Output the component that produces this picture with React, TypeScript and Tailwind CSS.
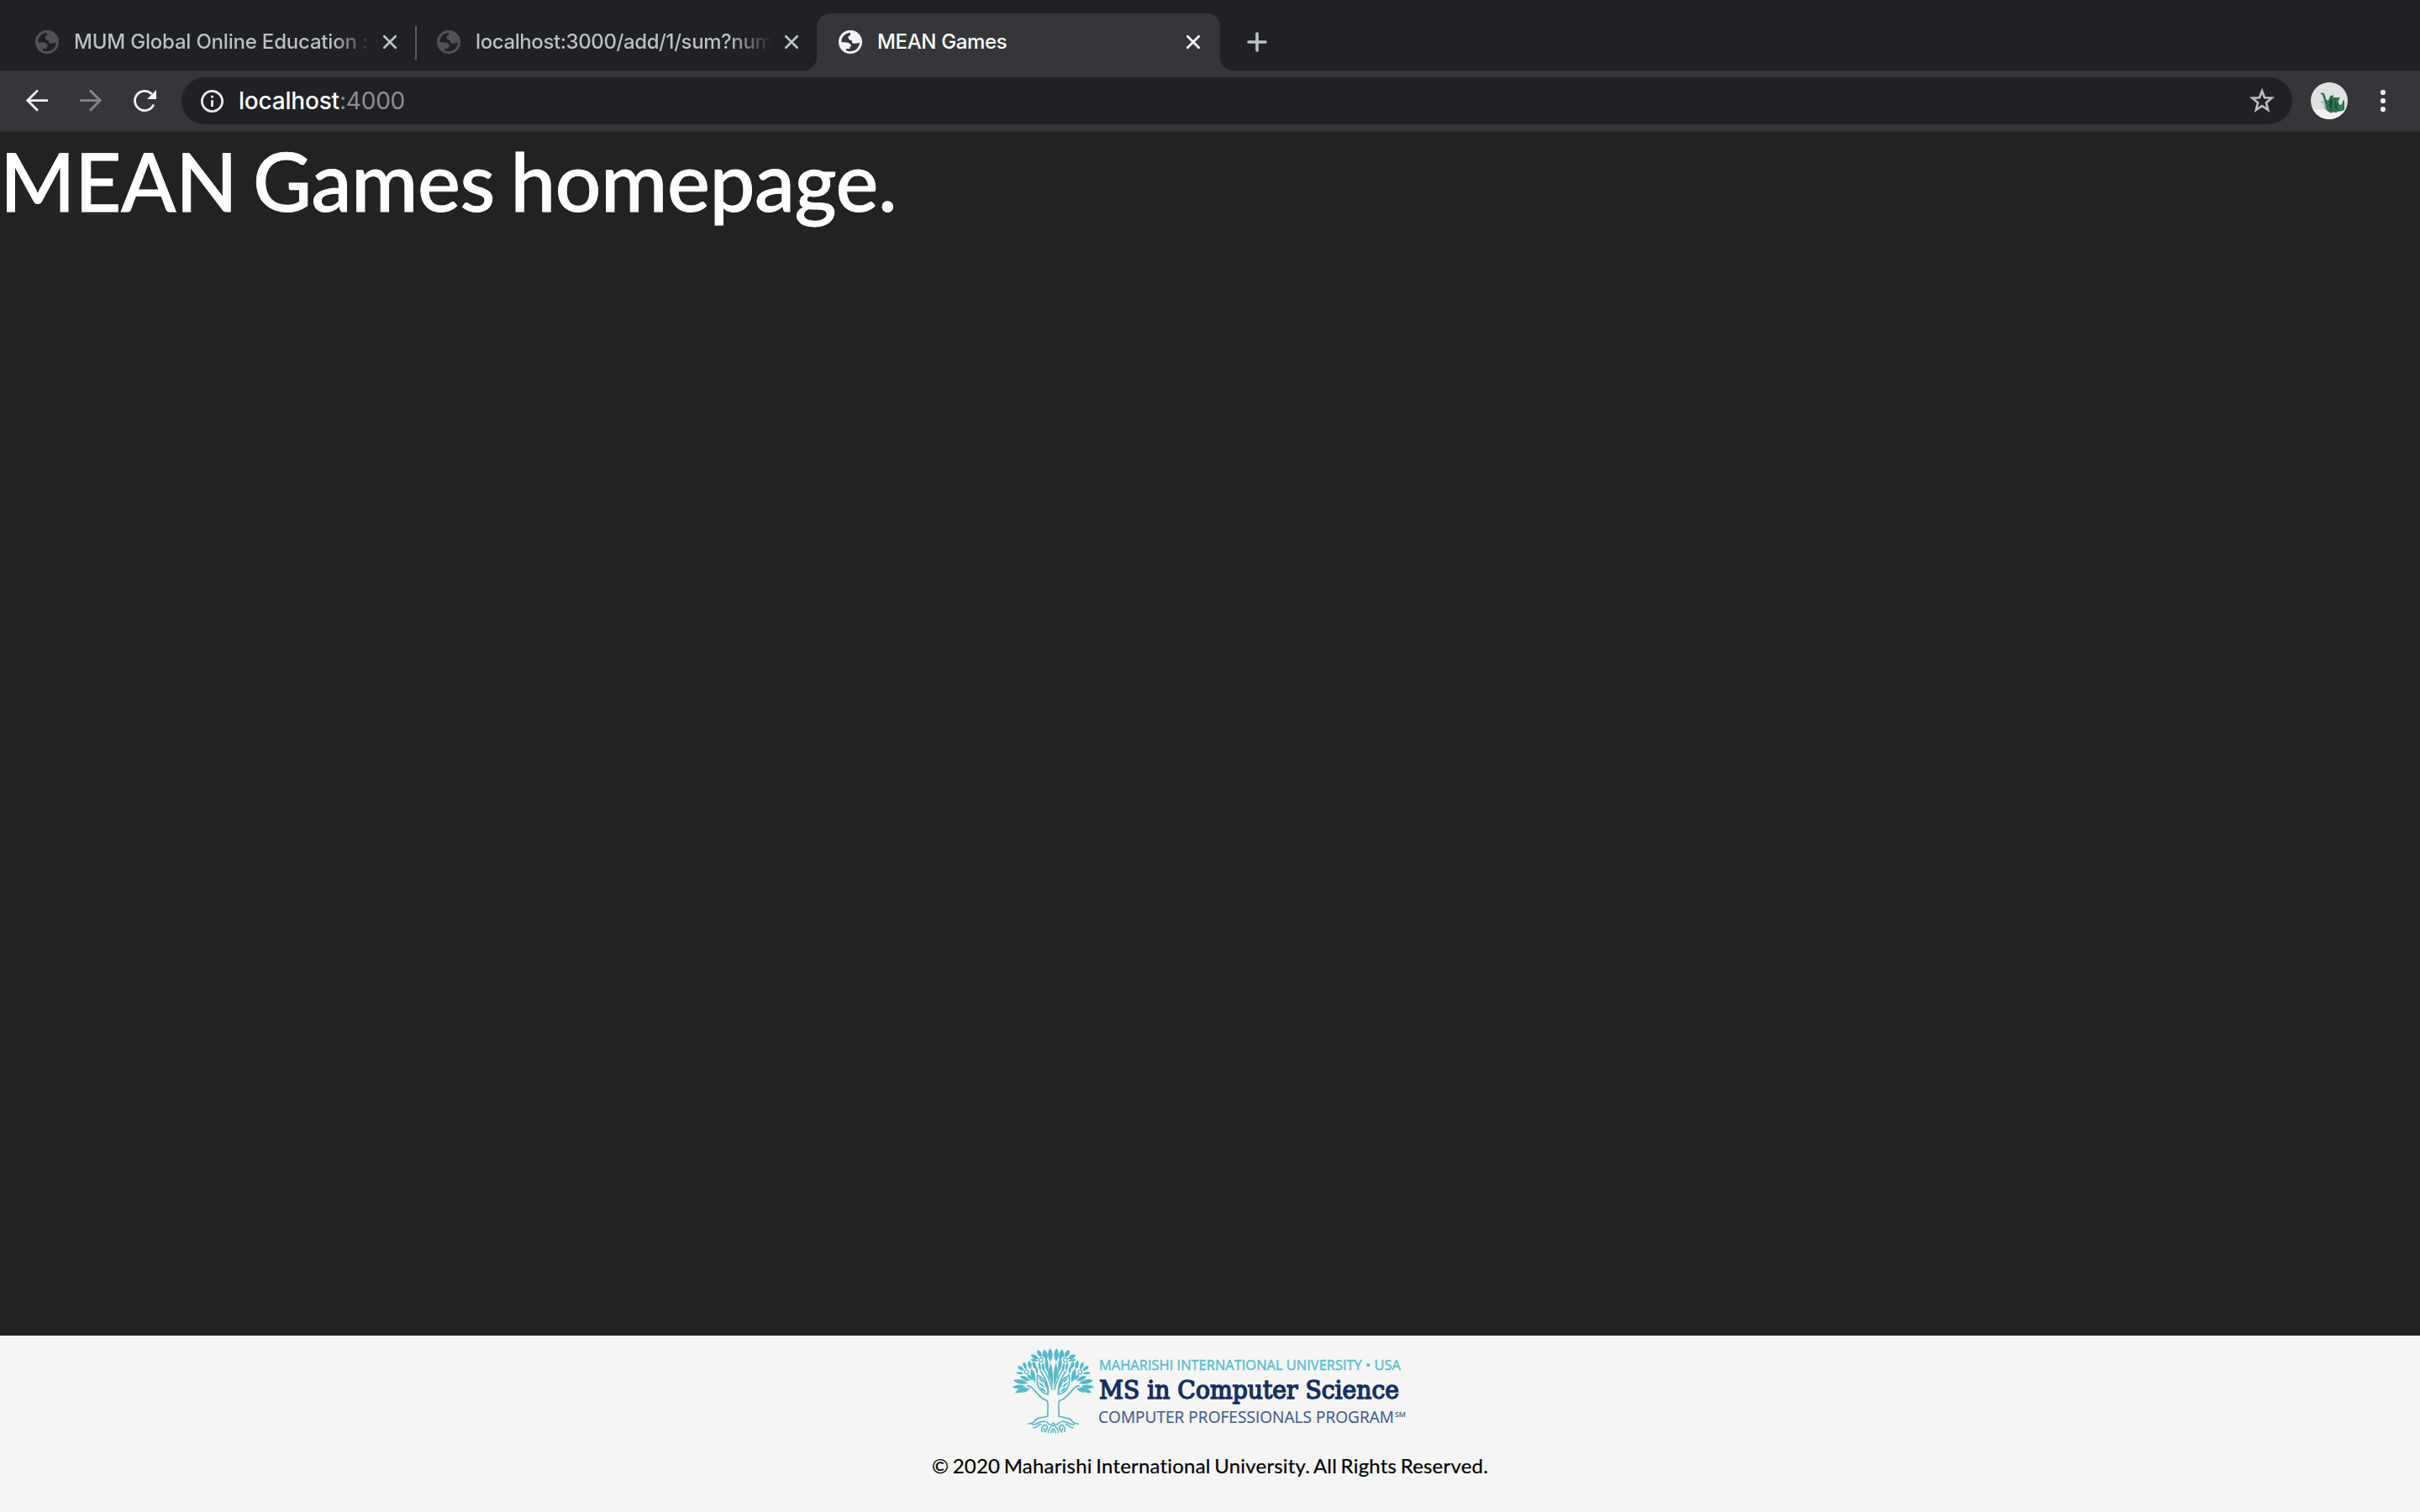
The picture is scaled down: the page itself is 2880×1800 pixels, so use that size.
import React from "react";

type Leaf = [number, number, number, number, number];

// base x, base y, tip x, tip y, width
const LEAVES: Leaf[] = [
  [180, 124, 179, 75, 17],
  [167, 120, 158, 79, 16],
  [148, 108, 134, 81, 15],
  [153, 108, 159, 83, 9],
  [139, 113, 110, 99, 14],
  [138, 120, 108, 116, 9],
  [169, 160, 165, 108, 13],
  [187, 215, 180, 124, 12],
  [177, 190, 174, 140, 8],
  [157, 160, 152, 126, 10],
  [145, 158, 139, 124, 9],
  [128, 150, 118, 122, 13],
  [110, 150, 103, 119, 14],
  [94, 152, 84, 124, 12],
  [86, 156, 64, 138, 13],
  [85, 165, 57, 163, 10],
  [125, 198, 112, 148, 15],
  [133, 168, 130, 140, 9],
  [116, 190, 98, 168, 11],
  [107, 192, 72, 175, 14],
  [99, 200, 48, 190, 16],
  [92, 211, 44, 214, 14],
  [98, 215, 54, 234, 15],
  [108, 216, 80, 234, 9],
];

function leafPath([x1, y1, x2, y2, w]: Leaf) {
  const dx = x2 - x1;
  const dy = y2 - y1;
  const len = Math.hypot(dx, dy);
  const nx = (-dy / len) * w;
  const ny = (dx / len) * w;
  const mx = x1 + dx * 0.56;
  const my = y1 + dy * 0.56;
  return `M${x1} ${y1}Q${mx + nx} ${my + ny} ${x2} ${y2}Q${mx - nx} ${my - ny} ${x1} ${y1}Z`;
}

function TreeHalf() {
  return (
    <g>
      {LEAVES.map((l, i) => (
        <path key={i} d={leafPath(l)} fill="#55b9c9" />
      ))}
      <g fill="none" stroke="#55b9c9" strokeWidth="5" strokeLinecap="round">
        <path d="M98 209C124 210 132 252 169 263C175 280 168 300 171 318C150 324 128 322 122 338C114 346 106 345 101 345" />
        <path d="M172 240C174 206 156 182 134 171C129 204 140 234 172 240Z" fill="#f5f5f5" />
        <path d="M171 238C176 205 160 180 146 158" />
        <path d="M186 222C183 205 172 180 160 156" strokeWidth="4.5" />
        <path d="M116 348C132 350 140 334 160 337M120 359C132 360 136 348 146 347" />
        <path d="M150 373C146 358 156 346 164 350C174 354 168 366 160 374" />
        <path d="M158 368V361M172 376C174 364 180 356 190 350M182 377C182 370 186 366 190 362M166 338C176 350 182 352 190 342" strokeWidth="4.5" />
      </g>
      <g fill="#55b9c9">
        <path d="M137 178Q152 186 156 200Q142 194 137 178Z" />
        <path d="M138 196Q154 202 160 216Q144 212 138 196Z" />
        <path d="M143 214Q158 218 166 232Q150 230 143 214Z" />
        <path d="M156 190Q168 204 168 222Q158 208 156 190Z" />
      </g>
      <circle cx="147" cy="117" r="7" fill="#f5f5f5" stroke="#55b9c9" strokeWidth="3.5" />
      <circle cx="95" cy="160" r="7" fill="#f5f5f5" stroke="#55b9c9" strokeWidth="3.5" />
    </g>
  );
}

function Logo() {
  return (
    <svg className="block h-28 w-[480px]" viewBox="0 0 480 112">
      <g transform="translate(-10 -20) scale(0.33333)">
        <TreeHalf />
        <g transform="translate(381 0) scale(-1 1)">
          <TreeHalf />
        </g>
        <path d="M190.5 377V368" stroke="#55b9c9" strokeWidth="4" />
      </g>
      <text x="108" y="31" fontFamily="Open Sans" fontSize="16.8" fill="#5cbccb" stroke="#5cbccb" strokeWidth="0.4" textLength="359" lengthAdjust="spacingAndGlyphs">
        MAHARISHI INTERNATIONAL UNIVERSITY • USA
      </text>
      <text x="108" y="65" fontFamily="DejaVu Serif" fontSize="29.5" fill="#14305f" stroke="#14305f" strokeWidth="1.5" textLength="357" lengthAdjust="spacingAndGlyphs">
        MS in Computer Science
      </text>
      <text x="107" y="94" fontFamily="Open Sans" fontSize="20" fill="#445f8e" stroke="#445f8e" strokeWidth="0.2" textLength="352" lengthAdjust="spacingAndGlyphs">
        COMPUTER PROFESSIONALS PROGRAM
      </text>
      <text x="460" y="87" fontFamily="Open Sans" fontSize="9.5" fontWeight="600" fill="#445f8e" textLength="13" lengthAdjust="spacingAndGlyphs">
        SM
      </text>
    </svg>
  );
}

function Globe({ className }: { className: string }) {
  return (
    <svg className={`size-7 shrink-0 ${className}`} viewBox="0 0 84 84" fill="currentColor" fillRule="evenodd">
      <path d="M42 0a42 42 0 1 0 0 84a42 42 0 1 0 0-84ZM10 42C10 24 24 10 42 9V14C42 20 36 19 34 23C33 28 38 30 38 34C42 36 46 36 48 38V44C52 50 66 46 75 44C73 62 60 75 42 75C36 75 30 74 27 72V66H40V60C46 58 46 52 42 50C36 42 24 44 10 42Z" />
    </svg>
  );
}

function Close({ className }: { className: string }) {
  return (
    <svg className={`size-5 shrink-0 ${className}`} viewBox="0 0 20 20" stroke="currentColor" strokeWidth="2.7" strokeLinecap="round">
      <path d="M3.3 3.3L16.7 16.7M16.7 3.3L3.3 16.7" />
    </svg>
  );
}

function TabStrip() {
  return (
    <div className="flex h-[84px] items-end bg-[#202124] text-2xl leading-[28px] font-[450] text-[#bdc1c6]">
      <div className="flex h-[68px] w-[494px] items-center pl-[42px]">
        <Globe className="text-[#505256]" />
        <div className="ml-[18px] w-[350px] overflow-hidden whitespace-nowrap bg-linear-to-r from-[#bdc1c6] from-88% to-[#bdc1c6]/10 bg-clip-text tracking-[-0.2px] text-transparent">
          MUM Global Online Education :
        </div>
        <Close className="ml-4" />
      </div>
      <div className="mb-[13px] h-10 w-0.5 bg-[#5a5c60]" />
      <div className="flex h-[68px] w-[476px] items-center pl-6">
        <Globe className="text-[#505256]" />
        <div className="ml-[18px] w-[352px] overflow-hidden whitespace-nowrap bg-linear-to-r from-[#bdc1c6] from-86% to-transparent bg-clip-text tracking-[-0.4px] text-transparent">
          localhost:3000/add/1/sum?num
        </div>
        <Close className="ml-[14px]" />
      </div>
      <div className="relative flex h-[68px] w-[480px] items-center rounded-t-2xl bg-[#35363a] pl-[26px] text-white">
        <svg className="absolute bottom-0 -left-4 size-4" viewBox="0 0 16 16" fill="#35363a">
          <path d="M16 0V16H0A16 16 0 0 0 16 0Z" />
        </svg>
        <svg className="absolute -right-4 bottom-0 size-4" viewBox="0 0 16 16" fill="#35363a">
          <path d="M0 0V16H16A16 16 0 0 1 0 0Z" />
        </svg>
        <Globe className="text-[#f1f3f4]" />
        <div className="ml-[18px] w-[350px] tracking-[-0.35px]">MEAN Games</div>
        <Close className="ml-4 text-white" />
      </div>
      <svg className="mb-[22px] ml-8 size-6" viewBox="0 0 24 24" stroke="#bdc1c6" strokeWidth="3.6" strokeLinecap="round">
        <path d="M12 2V22M2 12H22" />
      </svg>
    </div>
  );
}

function Toolbar() {
  return (
    <div className="flex h-[74px] items-center border-b-2 border-[#28292b] bg-[#35363a]">
      <svg className="ml-7 size-8" viewBox="0 0 32 32" fill="none" stroke="#f1f3f4" strokeWidth="2.8">
        <path d="M29 15.6H5M17 3.5L4.8 15.6L17 27.7" />
      </svg>
      <svg className="ml-8 size-8" viewBox="0 0 32 32" fill="none" stroke="#85868a" strokeWidth="2.8">
        <path d="M3 15.6H27M15 3.5L27.2 15.6L15 27.7" />
      </svg>
      <svg className="ml-8 size-8" viewBox="0 0 32 32" fill="none">
        <path d="M26.8 20.5A11.6 11.6 0 1 1 24.5 8" stroke="#f1f3f4" strokeWidth="2.8" />
        <path d="M30 3V14H19Z" fill="#f1f3f4" />
      </svg>
      <div className="ml-7 flex h-14 w-[2512px] items-center rounded-full bg-[#202124] pr-5 pl-[22px]">
        <svg className="size-[29px]" viewBox="0 0 29 29" fill="none" stroke="#e8eaed" strokeWidth="2.8">
          <circle cx="14.5" cy="14.5" r="12.1" />
          <path d="M14.5 13.2V21M14.5 7.8V10.6" />
        </svg>
        <div className="ml-[17px] grow text-[28px] leading-8 font-[450] tracking-[-0.2px] text-white">
          localhost<span className="font-normal text-[#8d8e90]">:4000</span>
        </div>
        <svg className="size-8" viewBox="0 0 32 32" fill="none" stroke="#bdbfc1" strokeWidth="2.6">
          <path d="M16 4.2L19 12.3L27.6 12.7L20.9 18.2L23.2 27L16 22L8.8 27L11.1 18.2L4.4 12.7L13 12.3Z" />
        </svg>
      </div>
      <svg className="ml-[22px] size-11" viewBox="0 0 132 132">
        <circle cx="66" cy="66" r="66" fill="#dfe1e1" />
        <path d="M8.3 98Q66 92 125.8 94A66 66 0 0 1 8.3 98Z" fill="#f0f1f1" />
        <path d="M34 70Q48 60 50 76L56 98L48 96L44 76Z" fill="#b4b7b8" />
        <path d="M33 40L44 37Q52 44 54 60L62 66L70 48L82 46L80 54L104 54L98 70L104 82Q114 80 114 66L120 64V98Q112 104 98 104L90 108L78 106L72 110L56 100L50 72L42 46Z" fill="#2f7350" />
        <path d="M70 54L78 66L74 104L66 84ZM88 62L96 98L86 92Z" fill="#1d5238" />
        <path d="M100 86L112 84L108 100Z" fill="#3d8a62" />
      </svg>
      <svg className="ml-8 size-8" viewBox="0 0 32 32" fill="#f1f3f4">
        <circle cx="10" cy="6" r="3.1" />
        <circle cx="10" cy="16" r="3.1" />
        <circle cx="10" cy="26" r="3.1" />
      </svg>
    </div>
  );
}

export default function App() {
  return (
    <div className="flex h-[1800px] w-[2880px] flex-col overflow-hidden bg-[#222222] font-[Inter,sans-serif]">
      <TabStrip />
      <Toolbar />
      <main className="grow font-[Lato,sans-serif] text-white">
        <h1 className="-mt-px text-[96px] leading-[115px] font-medium tracking-[-0.4px] [word-spacing:-5px] [-webkit-text-stroke:0.9px_white]">
          MEAN Games homepage.
        </h1>
      </main>
      <footer className="flex h-[210px] flex-col items-center bg-[#f5f5f5] pt-[10px] font-[Lato,sans-serif] text-black">
        <Logo />
        <p className="mt-[15px] text-2xl leading-9 tracking-[0.2px] [font-variant-ligatures:none] [word-spacing:-1.8px] [-webkit-text-stroke:0.2px_black]">
          © 2020 Maharishi International University. All Rights Reserved.
        </p>
      </footer>
    </div>
  );
}
